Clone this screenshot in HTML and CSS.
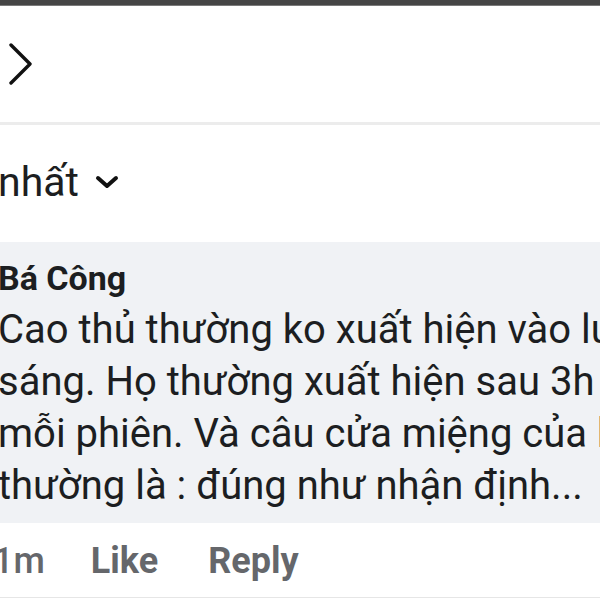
FILE: index.html
```html
<!DOCTYPE html>
<html lang="vi">
<head>
<meta charset="utf-8">
<link rel="stylesheet" href="styles.css">
</head>
<body>
<div class="page">
  <div class="topbar"></div>
  <div class="header">
    <svg class="chev-right" width="24" height="42" viewBox="0 0 24 42"><path d="M2 2 L21 21 L2 40" fill="none" stroke="#111" stroke-width="3.4" stroke-linecap="round" stroke-linejoin="round"/></svg>
  </div>
  <div class="sort">
    <span class="sort-label">nhất</span>
    <svg class="chev-down" width="24" height="14" viewBox="0 0 24 14"><path d="M3 3 L12 11 L21 3" fill="none" stroke="#111" stroke-width="4" stroke-linecap="round" stroke-linejoin="round"/></svg>
  </div>
  <div class="bubble">
    <div class="name">Bá Công</div>
    <div class="body">Cao thủ thường ko xuất hiện vào lu<br>sáng. Họ thường xuất hiện sau 3h<br>mỗi phiên. Và câu cửa miệng của h<br>thường là : đúng như nhận định...</div>
  </div>
  <div class="actions">
    <span class="time">1m</span>
    <span class="act like">Like</span>
    <span class="act reply">Reply</span>
  </div>
</div>
</body>
</html>
```

FILE: styles.css
```css
html, body {
  margin: 0;
  padding: 0;
  background: #fff;
  overflow: hidden;
}
.page {
  width: 600px;
  height: 600px;
  overflow: hidden;
  font-family: Roboto, "Noto Sans", sans-serif;
  color: #1c1e21;
}
.topbar {
  height: 5px;
  background: #454545;
  border-bottom: 1px solid #7a7a7a;
}
.header {
  height: 116px;
  display: flex;
  align-items: center;
  padding-left: 9px;
  border-bottom: 3px solid #ececec;
}
.sort {
  display: flex;
  align-items: center;
  padding: 34px 0 37px 0;
  margin-left: -2px;
}
.sort-label {
  font-size: 41px;
  line-height: 46px;
  white-space: nowrap;
}
.chev-down {
  margin-left: 16px;
}
.bubble {
  background: #f0f2f5;
  padding: 16px 0 11px 0;
  margin-left: -2px;
}
.name {
  font-size: 34px;
  font-weight: 700;
  line-height: 40px;
  white-space: nowrap;
}
.body {
  margin-top: 6px;
  font-size: 40px;
  line-height: 52px;
  white-space: nowrap;
}
.actions {
  display: flex;
  margin-top: 16px;
  margin-left: -7px;
  padding-bottom: 14px;
  border-bottom: 1px solid #e6e6e6;
  font-size: 36px;
  font-weight: 700;
  line-height: 44px;
  color: #65676b;
}
.time {
  font-weight: 500;
}
.like {
  margin-left: 46px;
}
.reply {
  margin-left: 50px;
}
```
